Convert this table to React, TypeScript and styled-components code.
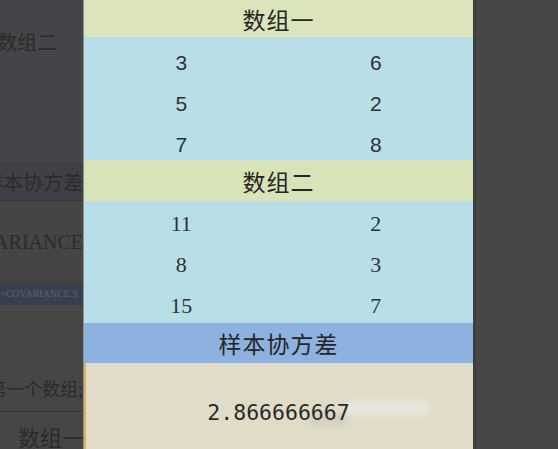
import React from "react";
import styled, { createGlobalStyle } from "styled-components";

const Global = createGlobalStyle`
  html, body { margin: 0; padding: 0; background: #464646; }
  body { width: 558px; height: 449px; overflow: hidden; }
`;

const Page = styled.div`
  display: flex;
  width: 558px;
  height: 449px;
  overflow: hidden;
  background: #464646;
`;

const SidePanel = styled.div`
  width: 84px;
  flex-shrink: 0;
  display: flex;
  flex-direction: column;
  background: #454545;
  border-right: 1px solid #8e8e8e;
  box-sizing: border-box;
  overflow: hidden;
`;

const SideRow = styled.div<{ $h: number; $bg?: string; $justify?: string; $padTop?: number; $line?: boolean }>`
  height: ${(p) => p.$h}px;
  flex-shrink: 0;
  display: flex;
  align-items: center;
  justify-content: ${(p) => p.$justify || "flex-start"};
  background: ${(p) => p.$bg || "transparent"};
  padding-top: ${(p) => p.$padTop || 0}px;
  box-sizing: border-box;
  border-bottom: ${(p) => (p.$line ? "1px solid #383838" : "none")};
  overflow: hidden;
`;

const SideText = styled.span<{ $size: number; $serif?: boolean; $color?: string; $shift?: number }>`
  font-family: ${(p) => (p.$serif ? '"Liberation Serif", serif' : '"Noto Sans CJK SC", sans-serif')};
  font-size: ${(p) => p.$size}px;
  color: ${(p) => p.$color || "#2b2b2b"};
  white-space: nowrap;
  flex-shrink: 0;
  margin-left: ${(p) => p.$shift || 0}px;
  line-height: 1;
`;

const Center = styled.div`
  width: 389px;
  flex-shrink: 0;
  display: flex;
  flex-direction: column;
`;

const Header = styled.div<{ $bg: string; $h: number }>`
  height: ${(p) => p.$h}px;
  flex-shrink: 0;
  background: ${(p) => p.$bg};
  display: flex;
  align-items: center;
  justify-content: center;
  font-family: "Noto Sans CJK SC", sans-serif;
  font-size: 23px;
  color: #262626;
  letter-spacing: 1px;
`;

const DataBlock = styled.div<{ $h: number }>`
  height: ${(p) => p.$h}px;
  flex-shrink: 0;
  background: #b8dfe7;
  display: grid;
  grid-template-columns: 1fr 1fr;
  grid-template-rows: repeat(3, 1fr);
`;

const Cell = styled.div<{ $serif?: boolean }>`
  display: flex;
  align-items: center;
  justify-content: center;
  padding-top: ${(p) => (p.$serif ? 6 : 10)}px;
  box-sizing: border-box;
  font-family: ${(p) => (p.$serif ? '"Liberation Serif", serif' : '"Liberation Sans", sans-serif')};
  font-size: ${(p) => (p.$serif ? 22 : 21)}px;
  line-height: 1;
  color: #2b3338;
`;

const Result = styled.div`
  flex: 1;
  position: relative;
  background: #e0dcc7;
  box-shadow: inset 2px 0 0 #d8b363;
  display: flex;
  align-items: center;
  justify-content: center;
  padding-top: 12px;
  box-sizing: border-box;
`;

const ResultValue = styled.span`
  position: relative;
  z-index: 1;
  font-family: "DejaVu Sans Mono", monospace;
  font-size: 21.5px;
  color: #2a2a2a;
`;

const Smudge = styled.div<{ $x: number; $y: number; $w: number; $h: number; $c: string }>`
  position: absolute;
  left: ${(p) => p.$x}px;
  top: ${(p) => p.$y}px;
  width: ${(p) => p.$w}px;
  height: ${(p) => p.$h}px;
  background: ${(p) => p.$c};
  filter: blur(2px);
`;

const RightPanel = styled.div`
  flex: 1;
  background: #474747;
  border-left: 3px solid #3f3f3f;
`;

const block1 = [
  ["3", "6"],
  ["5", "2"],
  ["7", "8"],
];
const block2 = [
  ["11", "2"],
  ["8", "3"],
  ["15", "7"],
];

export default function App() {
  return (
    <>
      <Global />
      <Page>
        <SidePanel>
          <SideRow $h={84} $bg="#444548">
            <SideText $size={20} $shift={-3}>数组二</SideText>
          </SideRow>
          <SideRow $h={79} $bg="#444548" />
          <SideRow $h={38} $bg="#3f4146" $justify="flex-end" $line>
            <SideText $size={20}>样本协方差</SideText>
          </SideRow>
          <SideRow $h={82} $bg="#464544" $justify="flex-end">
            <SideText $size={20} $serif>VARIANCE</SideText>
          </SideRow>
          <SideRow $h={22} $bg="#3a404b">
            <SideText $size={10} $serif $color="#56607a">=COVARIANCE.S</SideText>
          </SideRow>
          <SideRow $h={60} $bg="#464646" />
          <SideRow $h={47} $bg="#464646" $justify="flex-end" $line>
            <SideText $size={18}>第一个数组;</SideText>
          </SideRow>
          <SideRow $h={37} $bg="#464646" $padTop={10}>
            <SideText $size={22} $shift={18}>数组一</SideText>
          </SideRow>
        </SidePanel>
        <Center>
          <Header $bg="#dbe4bb" $h={37}>数组一</Header>
          <DataBlock $h={123}>
            {block1.map((r) =>
              r.map((v, i) => <Cell key={r.join() + i}>{v}</Cell>)
            )}
          </DataBlock>
          <Header $bg="#d9e3b8" $h={41}>数组二</Header>
          <DataBlock $h={122}>
            {block2.map((r) =>
              r.map((v, i) => (
                <Cell key={r.join() + i} $serif>
                  {v}
                </Cell>
              ))
            )}
          </DataBlock>
          <Header $bg="#8db2e0" $h={40}>样本协方差</Header>
          <Result>
            <Smudge $x={226} $y={50} $w={36} $h={12} $c="#d3cfc3" />
            <Smudge $x={262} $y={38} $w={82} $h={14} $c="#e9e6dc" />
            <ResultValue>2.866666667</ResultValue>
          </Result>
        </Center>
        <RightPanel />
      </Page>
    </>
  );
}
